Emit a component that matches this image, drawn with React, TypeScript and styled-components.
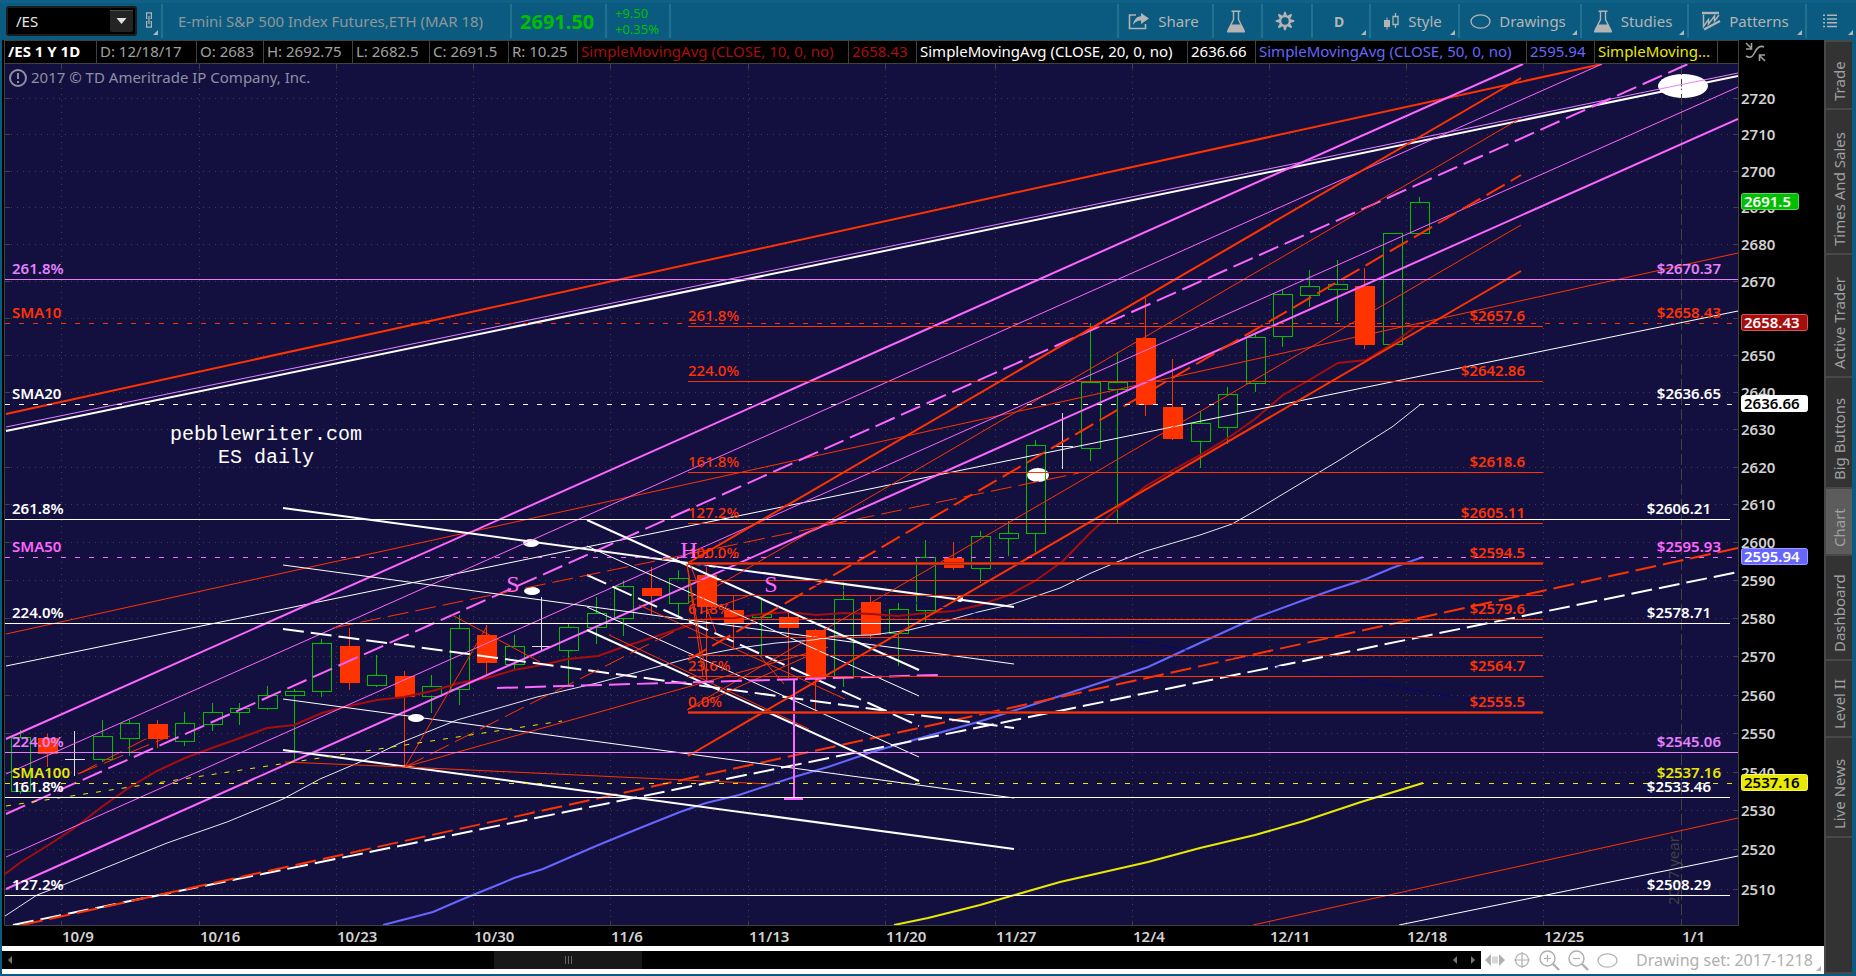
import React, { useState } from 'react';
import styled, { createGlobalStyle, css } from 'styled-components';

const palette = {
	blue: '#0b5b80',
	blueLine: '#24708f',
	icon: '#b4b4b4',
	plot: '#131040',
	grid: '#414141',
	axis: '#d2d2d2',
	red: '#ff3300',
	darkRed: '#a80d0d',
	pink: '#ff66ff',
	violet: '#e580ff',
	white: '#ffffff',
	yellow: '#e8e800',
	periwinkle: '#6666ff',
	green: '#00bf00',
};

const font = `'Noto Sans', 'Open Sans', sans-serif`;

const GlobalStyle = createGlobalStyle`
	* { box-sizing: border-box; }
	body {
		margin: 0;
		background: ${palette.blue};
		font-family: ${font};
	}
	button, select {
		font-family: inherit;
		border: 0;
		margin: 0;
	}
`;

const Page = styled.div`
	display: flex;
	flex-direction: column;
	min-height: 100vh;
	padding-bottom: 2px;
	background: ${palette.blue};
`;

/* ---------- toolbar ---------- */

const Toolbar = styled.header`
	display: flex;
	height: 40px;
	padding: 4px 0 2px 6px;
	color: ${palette.icon};
	box-shadow: inset 0 4px 0 -1px #0f6187;
`;

const SymbolBox = styled.label`
	display: flex;
	align-items: center;
	position: relative;
	width: 131px;
	height: 30px;
	margin-top: 2px;
	background: #000;
	border: 2px solid #1c1c1c;
	border-radius: 3px;
	select {
		appearance: none;
		width: 100%;
		height: 100%;
		padding: 0 0 0 8px;
		background: transparent;
		color: #e6e6e6;
		font-size: 15px;
	}
	svg {
		position: absolute;
		right: 2px;
		top: 2px;
		pointer-events: none;
	}
`;

const LinkButton = styled.button`
	display: flex;
	justify-content: center;
	position: relative;
	width: 24px;
	padding: 8px 0 0;
	background: transparent;
`;

const cell = css`
	display: flex;
	align-items: center;
	height: 34px;
	border-left: 2px solid ${palette.blueLine};
	white-space: nowrap;
`;

const Instrument = styled.div`
	${cell}
	width: 349px;
	padding-left: 15px;
	color: #8f9698;
	font-size: 15px;
`;

const LastPrice = styled.div`
	${cell}
	width: 95px;
	padding-left: 8px;
	color: ${palette.green};
	font-size: 20px;
	font-weight: 700;
`;

const Change = styled.div`
	${cell}
	width: 66px;
	padding-left: 8px;
	border-right: 2px solid ${palette.blueLine};
	color: ${palette.green};
	font-size: 13px;
	line-height: 16px;
`;

const Tools = styled.nav`
	display: flex;
	margin-left: auto;
`;

const ToolButton = styled.button<{ $width: number; $bold?: boolean }>`
	${cell}
	justify-content: center;
	gap: 8px;
	position: relative;
	width: ${(props) => props.$width}px;
	padding: 0 4px 0 0;
	background: transparent;
	color: ${palette.icon};
	font-size: ${(props) => (props.$bold ? 14 : 15)}px;
	font-weight: ${(props) => (props.$bold ? 700 : 400)};
`;

const Corner = styled.i`
	position: absolute;
	right: 3px;
	bottom: 3px;
	border-left: 5px solid transparent;
	border-bottom: 5px solid ${palette.icon};
`;

/* ---------- body ---------- */

const Body = styled.div`
	display: flex;
	flex: 1;
	padding: 0 4px 0 2px;
`;

const Main = styled.main`
	display: flex;
	flex: 1;
	flex-direction: column;
	min-width: 0;
	background: #000;
`;

const StatusRow = styled.div`
	display: flex;
	height: 24px;
	padding-left: 2px;
	background: #000;
`;

const StatusCells = styled.div`
	display: flex;
	flex: 1;
	min-width: 0;
	overflow: hidden;
	border: 1px solid ${palette.grid};
`;

const StatusCell = styled.span<{ $width: number; $color?: string; $bold?: boolean }>`
	flex: none;
	width: ${(props) => props.$width}px;
	padding-left: 3px;
	border-right: 1px solid ${palette.grid};
	color: ${(props) => props.$color || '#a0a0a0'};
	font-size: 15px;
	font-weight: ${(props) => (props.$bold ? 700 : 400)};
	line-height: 21px;
	white-space: nowrap;
`;

const StatusEnd = styled.button`
	display: flex;
	align-items: center;
	width: 85px;
	padding: 0 0 0 6px;
	background: #000;
`;

const ChartSvg = styled.svg`
	display: block;
	width: 100%;
	height: auto;
	font-family: ${font};
	font-size: 15px;
`;

const Footer = styled.footer`
	display: flex;
	height: 28px;
	background: #fff;
	color: #b0b0b0;
	font-size: 16px;
`;

const ScrollTrack = styled.div`
	display: flex;
	flex: 1;
	align-items: center;
	height: 18px;
	margin-top: 5px;
	padding: 0 6px;
	background: #000;
`;

const ScrollThumb = styled.div`
	display: flex;
	align-items: center;
	justify-content: center;
	width: 148px;
	height: 18px;
	background: #181818;
`;

const Spacer = styled.div<{ $grow: number }>`
	flex: ${(props) => props.$grow};
`;

const Arrow = styled.button`
	width: 18px;
	height: 18px;
	padding: 0;
	background: transparent;
	line-height: 0;
	text-align: right;
	&:first-child {
		text-align: left;
	}
`;

const FooterTools = styled.div`
	display: flex;
	align-items: center;
	gap: 8px;
	position: relative;
	width: 343px;
	padding-left: 4px;
	button {
		padding: 0;
		background: transparent;
		line-height: 0;
	}
	span {
		margin-left: 10px;
		white-space: nowrap;
	}
`;

const Tabs = styled.aside`
	display: flex;
	flex-direction: column;
	gap: 2px;
	width: 28px;
	padding: 2px 0 2px 2px;
	background: #484848;
`;

const Tab = styled.button<{ $size: number; $active?: boolean }>`
	display: flex;
	align-items: center;
	height: ${(props) => props.$size}px;
	padding: 7px 0 0;
	background: ${(props) => (props.$active ? '#5c5c5c' : '#333333')};
	color: #a0a0a0;
	font-size: 15px;
	line-height: 26px;
	white-space: nowrap;
	writing-mode: vertical-rl;
	transform: rotate(180deg);
`;

const TabFill = styled.div`
	flex: 1;
	background: #333333;
`;

/* ---------- icons ---------- */

const ShareIcon = () => (
	<svg width="22" height="18" viewBox="0 0 22 18" fill="none">
		<path d="M8 3H1.500v13.500h16V12" stroke="#b4b4b4" strokeWidth="1.600" />
		<path d="M13 1l8 5.500-8 5.500V8.500c-4 0-6 1.500-8 4.500C5.500 8 8.500 4.500 13 4.200z" fill="#b4b4b4" />
	</svg>
);

const FlaskIcon = () => (
	<svg width="20" height="23" viewBox="0 0 20 23" fill="none">
		<path d="M5.500 1.200h9M7.500 1.500v8L2 20.500M12.500 1.500v8L18 20.500" stroke="#b4b4b4" strokeWidth="1.400" />
		<path d="M4.800 14.500h10.400L19 21.200c.2.800-.3 1.300-1 1.300H2c-.7 0-1.200-.5-1-1.300z" fill="#b4b4b4" />
	</svg>
);

const GearIcon = () => (
	<svg width="20" height="20" viewBox="-10 -10 20 20">
		<circle r="4.800" fill="none" stroke="#b4b4b4" strokeWidth="2.200" />
		{[0, 45, 90, 135, 180, 225, 270, 315].map((a) => (
			<path key={a} d="M-2 -5L-.8 -9.300H.8L2 -5z" fill="#b4b4b4" transform={`rotate(${a})`} />
		))}
	</svg>
);

const StyleIcon = () => (
	<svg width="17" height="18" viewBox="0 0 17 18">
		<path d="M1 8h6v7H1zM3.500 5.500h1v12h-1z" fill="#b4b4b4" />
		<path d="M10 4.500h5v8h-5zM12.500 1v3.500M12.500 12.500V16" fill="none" stroke="#b4b4b4" strokeWidth="1.300" />
	</svg>
);

const OvalIcon = () => (
	<svg width="21" height="15" viewBox="0 0 21 15">
		<ellipse cx="10.500" cy="7.500" rx="9.500" ry="6.700" fill="none" stroke="#b4b4b4" strokeWidth="1.300" />
	</svg>
);

const PatternIcon = () => (
	<svg width="20" height="20" viewBox="0 0 20 20" fill="none" stroke="#b4b4b4">
		<path d="M1 2h17" strokeWidth="2.400" />
		<path d="M2.500 3.500v12l5-7v4.500l6-8v5l4.500-6" strokeWidth="1.500" />
		<path d="M3 18.500L19 10" strokeWidth="2.200" />
	</svg>
);

const ListIcon = () => (
	<svg width="14" height="14" viewBox="0 0 14 14" stroke="#b4b4b4" strokeWidth="1.400">
		<path d="M0 1.200h2M4 1.200h10M0 5h2M4 5h10M0 8.800h2M4 8.800h10M0 12.500h2M4 12.500h10" />
	</svg>
);

const ZoomIcon = ({ plus }: { plus?: boolean }) => (
	<svg width="21" height="21" viewBox="0 0 21 21" fill="none" stroke="#b0b0b0">
		<circle cx="8.500" cy="8.500" r="7.500" strokeWidth="1.500" />
		<path d="M14 14l6 6" strokeWidth="2.400" />
		<path d={plus ? 'M5 8.500h7M8.500 5v7' : 'M5 8.500h7'} strokeWidth="1.200" />
	</svg>
);

/* ---------- chart data ---------- */

const prices: [number, number][] = [
	[2720, 98], [2710, 134], [2700, 171], [2690, 207], [2680, 244], [2670, 281], [2660, 318], [2650, 355],
	[2640, 392], [2630, 429], [2620, 467], [2610, 504], [2600, 542], [2590, 580], [2580, 618], [2570, 656],
	[2560, 695], [2550, 733], [2540, 772], [2530, 810], [2520, 849], [2510, 889],
];

const dates: [string, number][] = [
	['10/9', 61], ['10/16', 199], ['10/23', 336], ['10/30', 473], ['11/6', 610], ['11/13', 748], ['11/20', 885],
	['11/27', 995], ['12/4', 1132], ['12/11', 1269], ['12/18', 1406], ['12/25', 1543],
];

// x, high, body top, body bottom, low, kind (g = up, r = down, w = doji)
const candles: [number, number, number, number, number, string][] = [
	[20, 730, 737, 791, 794, 'g'], [47, 734, 738, 754, 767, 'r'], [74, 731, 759, 759, 776, 'w'],
	[102, 720, 736, 759, 762, 'g'], [129, 720, 723, 738, 756, 'g'], [157, 720, 724, 739, 748, 'r'],
	[184, 712, 723, 741, 746, 'g'], [212, 703, 712, 724, 731, 'g'], [239, 703, 708, 712, 725, 'g'],
	[267, 686, 695, 708, 710, 'g'], [294, 689, 691, 695, 761, 'g'], [321, 639, 643, 691, 697, 'g'],
	[349, 628, 646, 683, 690, 'r'], [376, 655, 675, 685, 687, 'g'], [404, 671, 676, 697, 767, 'r'],
	[431, 675, 686, 696, 713, 'g'], [459, 615, 628, 689, 705, 'g'], [486, 625, 635, 663, 674, 'r'],
	[514, 635, 646, 664, 669, 'g'], [541, 597, 646, 646, 652, 'w'], [568, 624, 627, 650, 685, 'g'],
	[596, 597, 613, 627, 644, 'g'], [623, 581, 586, 618, 636, 'g'], [651, 567, 588, 596, 615, 'r'],
	[678, 570, 578, 603, 619, 'g'], [706, 567, 575, 607, 682, 'r'], [733, 595, 610, 623, 649, 'r'],
	[761, 599, 614, 617, 655, 'g'], [788, 612, 617, 628, 678, 'r'], [815, 629, 630, 679, 710, 'r'],
	[843, 582, 599, 677, 687, 'g'], [870, 595, 602, 635, 639, 'r'], [898, 603, 609, 633, 666, 'g'],
	[925, 540, 557, 610, 622, 'g'], [953, 542, 558, 568, 570, 'r'], [980, 531, 536, 568, 583, 'g'],
	[1008, 521, 533, 538, 556, 'g'], [1035, 440, 445, 533, 552, 'g'], [1062, 413, 446, 446, 469, 'w'],
	[1090, 323, 382, 448, 461, 'g'], [1117, 352, 382, 389, 523, 'g'], [1145, 298, 338, 405, 416, 'r'],
	[1172, 359, 407, 439, 440, 'r'], [1200, 411, 423, 441, 468, 'g'], [1227, 387, 394, 427, 444, 'g'],
	[1255, 334, 337, 383, 392, 'g'], [1282, 290, 294, 336, 347, 'g'], [1309, 270, 286, 295, 307, 'g'],
	[1337, 260, 284, 289, 321, 'g'], [1364, 268, 286, 345, 349, 'r'], [1392, 233, 233, 344, 345, 'g'],
	[1419, 197, 202, 233, 234, 'g'],
];

const sma10 =
	'5,874 21,862 47,846 73,829 103,806 130,787 157,771 185,758 212,748 240,738 267,728 294,725 322,713 349,706 377,700 404,697 432,691 459,683 487,678 514,670 542,665 568,659 598,656 623,647 651,638 690,625 706,619 734,618 761,614 789,612 816,615 844,613 871,614 898,616 926,613 954,611 980,605 1009,595 1035,581 1063,561 1091,532 1117,509 1146,486 1173,470 1200,455 1228,438 1255,419 1283,395 1311,379 1338,363 1366,360 1392,344 1419,324';
const sma20 =
	'5,916 37,895 63,885 100,870 167,843 227,822 283,799 320,779 367,759 400,743 457,720 537,697 597,683 690,658 702,655 739,648 776,643 813,640 835,636 872,635 909,630 946,621 978,612 1013,604 1060,588 1091,573 1117,562 1146,551 1173,543 1200,535 1232,524 1255,511 1283,494 1338,461 1392,427 1421,404';
const sma50 =
	'383,925 433,912 463,899 500,884 514,878 543,869 596,846 640,828 680,812 706,803 739,795 794,777 828,767 872,752 924,737 978,722 1035,704 1060,696 1148,667 1200,643 1255,618 1304,600 1335,589 1366,579 1392,568 1423,557';
const sma100 = '894,925 928,918 980,905 1060,882 1148,862 1200,848 1255,835 1304,821 1361,802 1423,783';

type Segment = [number, number, number, number, string, number, string?];

const { red, pink, violet, white, yellow } = palette;
const long = '21 7';

const trends: Segment[] = [
	// rising channels
	[6, 634, 1738, 253, red, 1],
	[6, 666, 1738, 311, white, 1],
	[6, 427, 1738, 73, violet, 1],
	[6, 431, 1738, 76, white, 2],
	[6, 414, 1602, 64, red, 2],
	[6, 739, 1523, 64, pink, 2],
	[6, 774, 1602, 64, pink, 1],
	[6, 814, 1688, 64, pink, 2, long],
	[6, 857, 1738, 87, pink, 1],
	[6, 889, 1738, 119, pink, 2],
	[1253, 925, 1738, 818, red, 1],
	[1399, 925, 1738, 856, white, 1],
	[13, 925, 1738, 572, white, 2, long],
	[22, 925, 1738, 548, red, 2, long],
	// falling white channel
	[283, 508, 1014, 607, white, 2],
	[283, 565, 1014, 664, white, 1],
	[283, 629, 1014, 728, white, 2, long],
	[283, 699, 1014, 798, white, 1],
	[283, 750, 1014, 849, white, 2],
	[587, 520, 919, 670, white, 2],
	[587, 546, 919, 696, white, 1],
	[587, 575, 919, 726, white, 2, long],
	[587, 607, 919, 757, white, 1],
	[587, 630, 919, 781, white, 2],
	// steep red channel
	[688, 563, 1521, 78, red, 2],
	[688, 603, 1521, 118, red, 1],
	[688, 660, 1521, 175, red, 2, long],
	[688, 709, 1521, 225, red, 1],
	[688, 756, 1521, 271, red, 2],
	// red fan lines
	[333, 628, 1079, 473, red, 1, long],
	[405, 767, 487, 626, red, 1],
	[405, 767, 675, 631, red, 1, long],
	[405, 767, 822, 649, red, 1],
	[285, 762, 405, 767, red, 1],
	[405, 767, 770, 784, red, 1],
	[452, 615, 540, 662, red, 1],
	[639, 605, 845, 699, red, 1],
	[609, 635, 809, 729, red, 1],
	[687, 564, 707, 680, red, 1],
	[690, 564, 716, 632, red, 1],
	[687, 564, 703, 676, red, 1],
	[687, 710, 828, 647, red, 1],
	[700, 613, 748, 596, red, 1],
	[760, 656, 784, 684, red, 1],
	[78, 774, 163, 730, red, 1, long],
	[78, 774, 170, 736, red, 1, long],
	[6, 806, 562, 721, yellow, 1, '5 8'],
	[688, 563, 1535, 711, '#04047a', 1, long],
	// neckline and target
	[497, 688, 938, 675, pink, 2, long],
	[794, 679, 794, 799, pink, 2],
	[784, 799, 803, 799, pink, 2],
];

// label, value, y, colour, line end, value right edge, dashed
const levels: [string, string, number, string, number, boolean][] = [
	['261.8%', '$2670.37', 279, violet, 1738, false],
	['SMA10', '$2658.43', 323, red, 1738, true],
	['SMA20', '$2636.65', 404, white, 1738, true],
	['261.8%', '$2606.21', 519, white, 1730, false],
	['SMA50', '$2595.93', 557, pink, 1738, true],
	['224.0%', '$2578.71', 623, white, 1730, false],
	['224.0%', '$2545.06', 752, violet, 1738, false],
	['SMA100', '$2537.16', 783, yellow, 1738, true],
	['161.8%', '$2533.46', 797, white, 1730, false],
	['127.2%', '$2508.29', 895, white, 1730, false],
];

const fibs: [string, string, number, boolean?][] = [
	['261.8%', '$2657.6', 326],
	['224.0%', '$2642.86', 381],
	['161.8%', '$2618.6', 472],
	['127.2%', '$2605.11', 523],
	['100.0%', '$2594.5', 563, true],
	['', '', 580],
	['', '', 595],
	['61.8%', '$2579.6', 619],
	['', '', 637],
	['', '', 655],
	['23.6%', '$2564.7', 676],
	['0.0%', '$2555.5', 712, true],
];

const badges: [string, number, number, string, string, string][] = [
	['2691.5', 193, 57, '#00bf00', '#5ad65a', '#fff'],
	['2658.43', 314, 66, '#a80d0d', '#c95a5a', '#fff'],
	['2636.66', 395, 66, '#ffffff', '#ffffff', '#000'],
	['2595.94', 548, 66, '#6666ff', '#9c9cff', '#fff'],
	['2537.16', 774, 66, '#e8e800', '#f4f470', '#000'],
];

/* ---------- chart parts ---------- */

const Grid = () => (
	<g stroke={palette.grid} shapeRendering="crispEdges">
		{prices.map(([price, y]) => (
			<g key={price}>
				<path d={`M5 ${y + 0.5}H1738`} strokeDasharray="1 5" />
				<path d={`M5 ${y + 0.5}h5M1734 ${y + 0.5}h4`} />
			</g>
		))}
		{dates.map(([label, x]) => (
			<g key={label}>
				<path d={`M${x + 0.5} 64V925`} strokeDasharray="1 5" />
				<path d={`M${x + 0.5} 64v5M${x + 0.5} 921v4`} />
			</g>
		))}
	</g>
);

const Candles = () => (
	<g shapeRendering="crispEdges">
		{candles.map(([x, high, top, bottom, low, kind]) => {
			if (kind === 'w') {
				return <path key={x} d={`M${x + 0.5} ${high}V${low}M${x - 9} ${top + 0.5}h20`} stroke="#dcdcdc" fill="none" />;
			}
			if (kind === 'r') {
				return (
					<g key={x} fill={red}>
						<rect x={x} y={high} width="1" height={low - high} />
						<rect x={x - 9} y={top} width="20" height={bottom - top} />
					</g>
				);
			}
			return (
				<g key={x} stroke={palette.green} fill="none">
					<path d={`M${x + 0.5} ${high}V${top}M${x + 0.5} ${bottom}V${low}`} />
					<rect x={x - 8.5} y={top + 0.5} width="19" height={bottom - top} />
				</g>
			);
		})}
	</g>
);

const Levels = () => (
	<g fontWeight="600">
		{levels.map(([label, value, y, color, end, dashed]) => (
			<g key={value} fill={color}>
				<path
					d={`M5 ${y + 0.5}H${end}`}
					stroke={color}
					strokeDasharray={dashed ? '5 9' : undefined}
					shapeRendering="crispEdges"
				/>
				<text x="12" y={y - 5}>{label}</text>
				<text x={end === 1738 ? 1721 : 1711} y={y - 5} textAnchor="end">{value}</text>
			</g>
		))}
		{fibs.map(([label, value, y, thick]) => (
			<g key={y} fill={red}>
				{thick && <path d={`M688 ${y + 0.5}H1543`} stroke="#a82a1c" strokeWidth="3" shapeRendering="crispEdges" />}
				<path d={`M688 ${y + 0.5}H1543`} stroke={red} shapeRendering="crispEdges" />
				<text x="688" y={y - 5} fontWeight="500">{label}</text>
				<text x="1525" y={y - 5} textAnchor="end">{value}</text>
			</g>
		))}
	</g>
);

const Trends = () => (
	<>
		{trends.map(([x1, y1, x2, y2, color, width, dash], i) => (
			<line
				key={i}
				x1={x1}
				y1={y1}
				x2={x2}
				y2={y2}
				stroke={color}
				strokeWidth={width}
				strokeDasharray={dash}
			/>
		))}
	</>
);

const Chart = () => (
	<ChartSvg viewBox="2 64 1822 882" role="img" aria-label="/ES daily chart">
		<defs>
			<clipPath id="plot">
				<rect x="5" y="64" width="1733" height="861" />
			</clipPath>
		</defs>
		<rect x="5" y="64" width="1733" height="861" fill={palette.plot} />
		<Grid />
		<g clipPath="url(#plot)">
			<g fill={white}>
				<ellipse cx="1683" cy="86" rx="25" ry="12" />
				<ellipse cx="531" cy="543" rx="8" ry="4" />
				<ellipse cx="532" cy="591" rx="8" ry="4" />
				<ellipse cx="416" cy="718" rx="8" ry="4" />
				<ellipse cx="1038" cy="475" rx="11" ry="7" />
				<circle cx="960" cy="599" r="3" />
			</g>
			<path d="M1681.500 64V925" stroke={palette.grid} strokeDasharray="11 4" shapeRendering="crispEdges" />
			<text transform="translate(1679 905) rotate(-90)" fill={palette.grid}>2017 year</text>
			<Candles />
			<g fill="none">
				<polyline points={sma10} stroke={palette.darkRed} strokeWidth="2" />
				<polyline points={sma20} stroke="#e6e6f0" />
				<polyline points={sma50} stroke={palette.periwinkle} strokeWidth="2" />
				<polyline points={sma100} stroke={yellow} strokeWidth="2" />
			</g>
			<Trends />
			<Levels />
			<g fill={pink} fontFamily="'Liberation Serif', serif" fontSize="24" textAnchor="middle">
				<text x="513" y="592">S</text>
				<text x="689" y="558">H</text>
				<text x="771" y="592">S</text>
			</g>
			<g fill={white} fontFamily="'Liberation Mono', monospace" fontSize="20" textAnchor="middle">
				<text x="266" y="440">pebblewriter.com</text>
				<text x="266" y="463">ES daily</text>
			</g>
			<g fill="none" stroke="#8f8fa3" strokeWidth="2">
				<circle cx="18" cy="78" r="8" />
				<path d="M18 73v6M18 81v2" />
			</g>
			<text x="31" y="83" fill="#8f8fa3">2017 © TD Ameritrade IP Company, Inc.</text>
		</g>
		<path d="M4.500 64V925.500H1738.500V64" fill="none" stroke={palette.grid} />
		<g fill={palette.axis} fontWeight="600">
			{prices.map(([price, y]) => (
				<text key={price} x="1741" y={y + 6}>{price}</text>
			))}
			{[...dates, ['1/1', 1681] as [string, number]].map(([label, x]) => (
				<text key={label} x={x + 1} y="942">{label}</text>
			))}
		</g>
		{badges.map(([value, y, width, fill, stroke, color]) => (
			<g key={value}>
				<rect x="1741.500" y={y + 0.5} width={width} height="16" rx="2" fill={fill} stroke={stroke} />
				<text x="1744" y={y + 14} fill={color} fontWeight="600">{value}</text>
			</g>
		))}
	</ChartSvg>
);

/* ---------- page ---------- */

const statusItems: [string, number, string?, boolean?][] = [
	['/ES 1 Y 1D', 92, '#ffffff', true],
	['D: 12/18/17', 100],
	['O: 2683', 67],
	['H: 2692.75', 89],
	['L: 2682.5', 77],
	['C: 2691.5', 79],
	['R: 10.25', 69],
	['SimpleMovingAvg (CLOSE, 10, 0, no)', 271, palette.darkRed],
	['2658.43', 68, palette.darkRed],
	['SimpleMovingAvg (CLOSE, 20, 0, no)', 271, white],
	['2636.66', 68, white],
	['SimpleMovingAvg (CLOSE, 50, 0, no)', 271, palette.periwinkle],
	['2595.94', 68, palette.periwinkle],
	['SimpleMoving...', 123, yellow],
];

const tabItems: [string, number][] = [
	['Trade', 66],
	['Times And Sales', 143],
	['Active Trader', 121],
	['Big Buttons', 109],
	['Chart', 65],
	['Dashboard', 103],
	['Level II', 75],
	['Live News', 98],
];

const App: React.FC = () => {
	const [activeTab, setActiveTab] = useState('Chart');

	return (
		<Page>
			<GlobalStyle />
			<Toolbar>
				<SymbolBox>
					<select aria-label="Symbol" defaultValue="/ES">
						<option>/ES</option>
					</select>
					<svg width="23" height="22" viewBox="0 0 23 22">
						<rect width="23" height="22" rx="2" fill="#242424" />
						<path d="M0 .5h23" stroke="#4a4a4a" />
						<path d="M6.500 8h10l-5 6z" fill="#e0e0e0" />
					</svg>
				</SymbolBox>
				<LinkButton aria-label="Link">
					<svg width="8" height="16" viewBox="0 0 8 16" fill="none" stroke="#b4b4b4" strokeWidth="1.200">
						<path d="M2.500 6.500H1.600V.8h4.800v5.700h-.9M2.500 9.500h-.9v5.700h4.800V9.500h-.9M4 4v8" />
					</svg>
					<Corner />
				</LinkButton>
				<Instrument>E-mini S&amp;P 500 Index Futures,ETH (MAR 18)</Instrument>
				<LastPrice>2691.50</LastPrice>
				<Change>
					+9.50
					<br />
					+0.35%
				</Change>
				<Tools>
					<ToolButton $width={95}><ShareIcon />Share</ToolButton>
					<ToolButton $width={49} aria-label="Edit studies"><FlaskIcon /></ToolButton>
					<ToolButton $width={50} aria-label="Settings"><GearIcon /></ToolButton>
					<ToolButton $width={58} $bold>D<Corner /></ToolButton>
					<ToolButton $width={89}><StyleIcon />Style<Corner /></ToolButton>
					<ToolButton $width={122}><OvalIcon />Drawings<Corner /></ToolButton>
					<ToolButton $width={107}><FlaskIcon />Studies<Corner /></ToolButton>
					<ToolButton $width={118}><PatternIcon />Patterns<Corner /></ToolButton>
					<ToolButton $width={51} aria-label="Menu"><ListIcon /><Corner /></ToolButton>
				</Tools>
			</Toolbar>
			<Body>
				<Main>
					<StatusRow>
						<StatusCells>
							{statusItems.map(([text, width, color, bold], i) => (
								<StatusCell key={i} $width={width} $color={color} $bold={bold}>{text}</StatusCell>
							))}
						</StatusCells>
						<StatusEnd aria-label="Fit scale">
							<svg width="22" height="20" viewBox="0 0 22 20" fill="none" stroke="#a0a0a0" strokeWidth="1.600">
								<path d="M1 1l5 5M6.500 1v6H1M20 19l-5-5M14.500 19v-6H20" />
								<path d="M1 14c5 3 7 0 9-4s5-7 9-5" />
							</svg>
						</StatusEnd>
					</StatusRow>
					<Chart />
					<Footer>
						<ScrollTrack role="scrollbar" aria-controls="root" aria-valuenow={36} aria-orientation="horizontal">
							<Arrow aria-label="Scroll to start">
								<svg width="4" height="8" viewBox="0 0 4 8"><path d="M4 0v8L0 4z" fill="#777" /></svg>
							</Arrow>
							<Spacer $grow={473} />
							<ScrollThumb>
								<svg width="7" height="8" viewBox="0 0 7 8"><path d="M.5 0v8M3.500 0v8M6.500 0v8" stroke="#666" /></svg>
							</ScrollThumb>
							<Spacer $grow={805} />
							<Arrow aria-label="Scroll left">
								<svg width="4" height="8" viewBox="0 0 4 8"><path d="M4 0v8L0 4z" fill="#777" /></svg>
							</Arrow>
							<Arrow aria-label="Scroll right">
								<svg width="4" height="8" viewBox="0 0 4 8"><path d="M0 0v8l4-4z" fill="#777" /></svg>
							</Arrow>
						</ScrollTrack>
						<FooterTools>
							<button aria-label="Expand">
								<svg width="20" height="12" viewBox="0 0 20 12" fill="#b0b0b0">
									<path d="M6 0v12L0 6zM14 0v12l6-6zM7.500 2.500h1v7h-1zM9.500 2.500h1v7h-1zM11.500 2.500h1v7h-1z" />
								</svg>
							</button>
							<button aria-label="Crosshair">
								<svg width="18" height="18" viewBox="0 0 18 18" fill="none" stroke="#b0b0b0" strokeWidth="1.200">
									<circle cx="9" cy="9" r="6.500" />
									<path d="M1 9h16M9 1v16" />
								</svg>
							</button>
							<button aria-label="Zoom in"><ZoomIcon plus /></button>
							<button aria-label="Zoom out"><ZoomIcon /></button>
							<button aria-label="Oval"><OvalIcon /></button>
							<span>Drawing set: 2017-1218</span>
							<Corner />
						</FooterTools>
					</Footer>
				</Main>
				<Tabs>
					{tabItems.map(([label, size]) => (
						<Tab key={label} $size={size} $active={label === activeTab} onClick={() => setActiveTab(label)}>
							{label}
						</Tab>
					))}
					<TabFill />
				</Tabs>
			</Body>
		</Page>
	);
};

export default App;
